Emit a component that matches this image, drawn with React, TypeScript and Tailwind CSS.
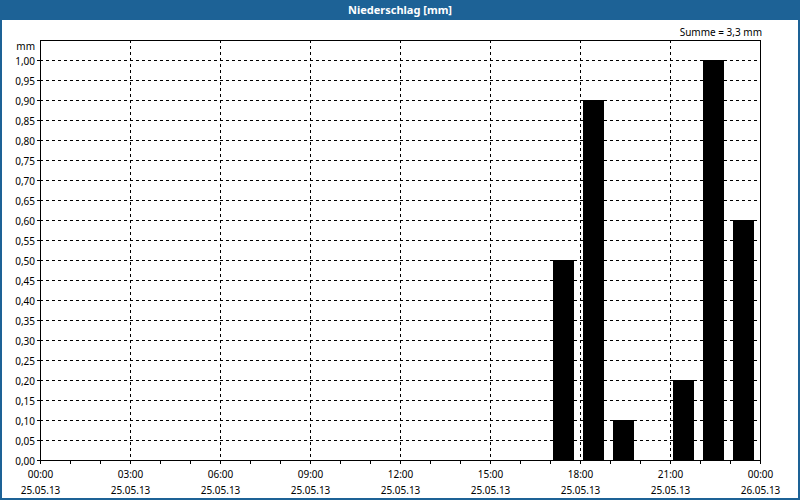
const bars = [
  { x: 553, v: 0.5 },
  { x: 583, v: 0.9 },
  { x: 613, v: 0.1 },
  { x: 673, v: 0.2 },
  { x: 703, v: 1.0 },
  { x: 733, v: 0.6 },
];

const yLabels = Array.from({ length: 21 }, (_, i) => i * 0.05);
const xLabels = ["00:00", "03:00", "06:00", "09:00", "12:00", "15:00", "18:00", "21:00", "00:00"];

export default function App() {
  return (
    <div className="w-[800px] h-[500px] flex flex-col bg-[#1d6296] font-['Liberation_Sans',sans-serif]">
      <div className="h-[20px] flex items-center justify-center text-white text-[11px] font-bold">
        Niederschlag [mm]
      </div>
      <div className="flex-1 mx-[2px] mb-[2px] bg-white">
        <svg width="796" height="478" viewBox="2 20 796 478" className="block">
          <text x="762" y="36" fontSize="10" textAnchor="end" fill="#000">Summe = 3,3 mm</text>
          <text x="35" y="50" fontSize="10" textAnchor="end" fill="#000">mm</text>
          {yLabels.map((v, i) => {
            const y = 460.5 - i * 20;
            return (
              <g key={i}>
                {i > 0 && (
                  <line x1="40" x2="760" y1={y} y2={y} stroke="#000" strokeDasharray="3 3" />
                )}
                <line x1="37" x2="40" y1={y} y2={y} stroke="#000" />
                <text x="35" y={y + 4} fontSize="10" textAnchor="end" fill="#000">
                  {v.toFixed(2).replace(".", ",")}
                </text>
              </g>
            );
          })}
          {xLabels.map((t, i) => {
            const x = 40.5 + i * 90;
            return (
              <g key={i}>
                {i > 0 && i < 8 && (
                  <line x1={x} x2={x} y1="40" y2="460" stroke="#000" strokeDasharray="3 3" />
                )}
                <text x={x} y="478" fontSize="10" textAnchor="middle" fill="#000">{t}</text>
                <text x={x} y="494" fontSize="10" textAnchor="middle" fill="#000">
                  {i === 8 ? "26.05.13" : "25.05.13"}
                </text>
              </g>
            );
          })}
          {Array.from({ length: 25 }, (_, i) => (
            <line key={i} x1={40.5 + i * 30} x2={40.5 + i * 30} y1="460" y2="464" stroke="#000" />
          ))}
          {bars.map((b) => (
            <rect key={b.x} x={b.x} y={460 - b.v * 400} width="21" height={b.v * 400} fill="#000" />
          ))}
          <rect x="40.5" y="40.5" width="720" height="420" fill="none" stroke="#000" />
        </svg>
      </div>
    </div>
  );
}
